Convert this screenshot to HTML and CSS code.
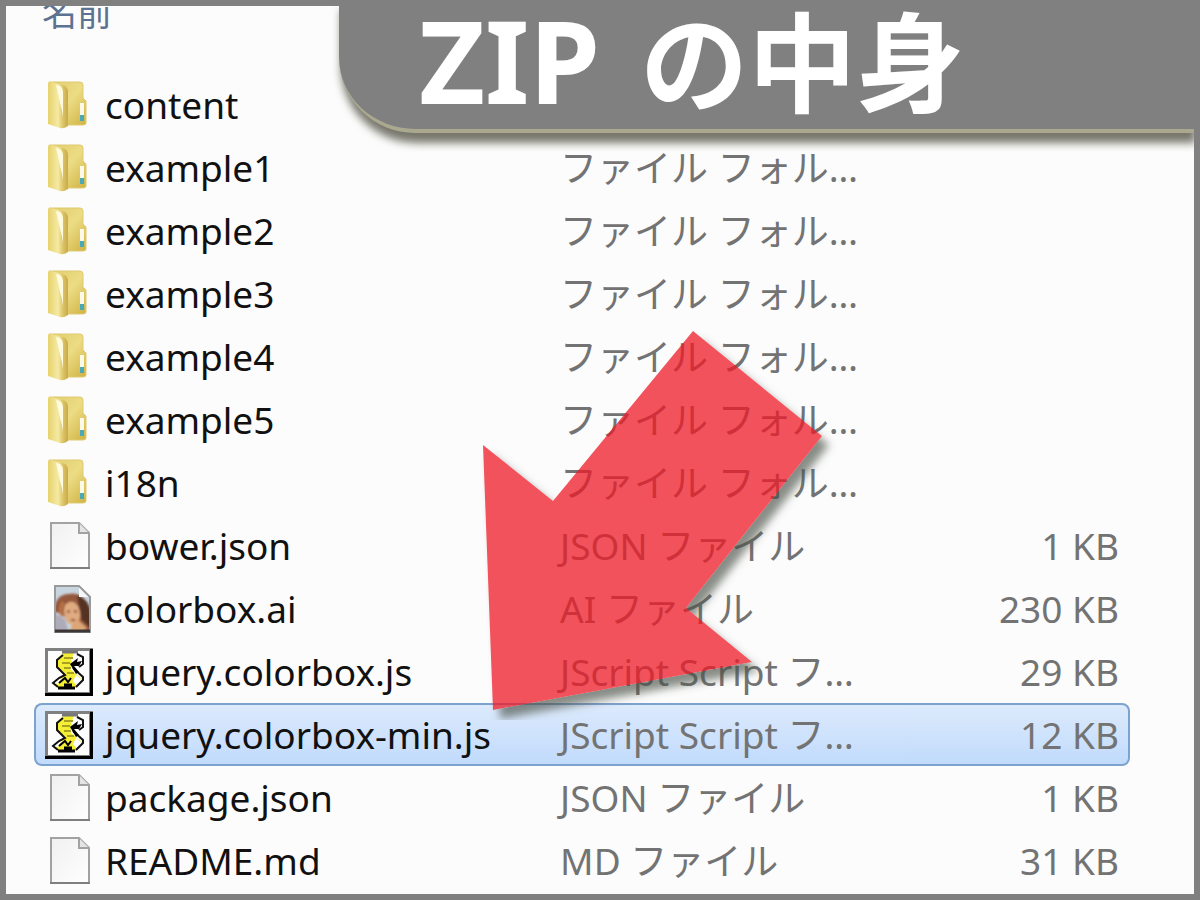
FILE: index.html
```html
<!DOCTYPE html>
<html lang="ja">
<head>
    <meta charset="UTF-8">
    <meta name="viewport" content="width=device-width, initial-scale=1.0">
    <title>ZIP の中身</title>
    <link rel="stylesheet" href="styles.css">
</head>
<body>
    <svg class="defs" aria-hidden="true">
        <defs>
            <linearGradient id="folderFront" x1="0" y1="0" x2="1" y2="0">
                <stop offset="0" stop-color="#e6d26c"/>
                <stop offset=".5" stop-color="#f5eaa4"/>
                <stop offset=".75" stop-color="#dcc467"/>
                <stop offset="1" stop-color="#c8aa48"/>
            </linearGradient>
            <linearGradient id="folderBack" x1="0" y1="0" x2="1" y2="1">
                <stop offset="0" stop-color="#e0cc6c"/>
                <stop offset=".5" stop-color="#ecdc84"/>
                <stop offset="1" stop-color="#d0b243"/>
            </linearGradient>
            <linearGradient id="paper" x1="0" y1="0" x2="1" y2="1">
                <stop offset="0" stop-color="#f0f0f0"/>
                <stop offset="1" stop-color="#ffffff"/>
            </linearGradient>
            <filter id="soft"><feGaussianBlur stdDeviation="1"/></filter>

            <symbol id="folder" viewBox="0 0 48 48">
                <path d="M4 1 H35 Q38 1 38 4 V17 L41 20 V42 Q41 44 38 44 H20 L4 42 Z" fill="url(#folderBack)" stroke="#dfca73"/>
                <path d="M3 3 Q3 1 6 1 L18 4 Q23 6 23 11 V45 Q19 48 15 47 L3 43 Z" fill="url(#folderFront)"/>
                <path d="M11 4 L15 5 Q18 7 18 12 V36 Q17 28 15 22 Q13 12 11 4" fill="#fffbe0"/>
                <rect x="35" y="22" width="4" height="12" fill="#fbf9e8"/>
                <rect x="35" y="34" width="4" height="6" fill="#4aa9b4"/>
            </symbol>

            <symbol id="file" viewBox="0 0 48 48">
                <path d="M6 1 H34 L44 11 V46 H6 Z" fill="url(#paper)" stroke="#a2a2a2" stroke-width="2"/>
                <path d="M34 1 V11 H44" fill="#e4e4e4" stroke="#a2a2a2" stroke-width="2"/>
                <path d="M5 46 H45" stroke="#7f7f7f" stroke-width="2"/>
            </symbol>

            <symbol id="ai" viewBox="0 0 48 48">
                <clipPath id="aiPage"><path d="M10 1 H34 L45 12 V47 H10 Z"/></clipPath>
                <g clip-path="url(#aiPage)">
                    <path d="M9 0 H46 V48 H9 Z" fill="#c8d4de"/>
                    <g filter="url(#soft)">
                        <path d="M9 27 Q10 9 24 9 Q36 6 42 20 L46 48 H36 L28 38 L14 28 Z" fill="#95583c"/>
                        <path d="M32 10 Q44 14 46 28 L46 44 L36 34 Z" fill="#563223"/>
                        <path d="M9 28 L20 34 L24 48 H9 Z" fill="#aeabb8"/>
                        <path d="M20 20 Q27 13 33 21 Q38 32 32 38 Q27 42 22 37 Q17 28 20 20 Z" fill="#e0ab80"/>
                        <path d="M32 34 L42 43 L36 48 H24 L27 40 Z" fill="#dca677"/>
                        <path d="M18 17 Q14 24 17 31" fill="none" stroke="#bd7646" stroke-width="3"/>
                        <path d="M22 27 L25 26 M29 26 L32 27 M26 35 H30" stroke="#8d4b3a" stroke-width="2"/>
                    </g>
                    <path d="M34 1 V12 H45 V1 Z" fill="#f4f6f7"/>
                </g>
                <path d="M10 1 H34 L45 12 V47 H10 Z" fill="none" stroke="#9a9a9a" stroke-width="2"/>
                <path d="M10 46 H45" stroke="#3c3636" stroke-width="3"/>
            </symbol>

            <symbol id="script" viewBox="0 0 48 48">
                <path d="M0 0 H48 V48 H0 Z" fill="#808080"/>
                <path d="M48 1 V48 H0 V45 H45 V1 Z" fill="#000"/>
                <path d="M3 3 H44 V44 H3 Z" fill="#fdfdfd"/>
                <path d="M18 5 H29 L26 12 L28 16 L24 20 L32 27 L37 31 L31 40 H14 L11 36 L17 29 L21 26 L13 20 L12 11 Z" fill="#f4ee35"/>
                <path d="M12 29 L18 28 L13 36 L8 35 Z M31 9 L35 10 L34 15 L29 14 Z M31 27 L37 32 L32 38 L28 33 Z" fill="#fff"/>
                <path d="M17 4 H33" stroke="#777" stroke-width="3"/>
                <path d="M18 7 L12 12 V19 L20 27 L14 30 L8 35 L13 39 M32 6 L38 9 V16 L34 19 M28 20 L38 29 V32 L31 39" fill="none" stroke="#111" stroke-width="2"/>
                <path d="M19 10 H28 M17 15 H25 M19 20 H26 M22 25 H29" stroke="#a8a021" stroke-width="2"/>
                <path d="M25 16 L33 10 L32 14 L37 13 L34 18 L29 18 L34 24 L31 26 Z" fill="#000"/>
                <path d="M14 35 L20 30 L23 34 L26 30" fill="none" stroke="#000" stroke-width="2"/>
                <path d="M13 40 H30 M19 37 H27" stroke="#000" stroke-width="3"/>
            </symbol>
        </defs>
    </svg>

    <main class="window">
        <table class="files">
            <thead>
                <tr><th class="name">名前</th><th class="type"></th><th class="size"></th></tr>
            </thead>
            <tbody>
                <tr><td><div class="file"><svg class="icon"><use href="#folder"/></svg>content</div></td><td></td><td></td></tr>
                <tr><td><div class="file"><svg class="icon"><use href="#folder"/></svg>example1</div></td><td>ファイル フォル…</td><td></td></tr>
                <tr><td><div class="file"><svg class="icon"><use href="#folder"/></svg>example2</div></td><td>ファイル フォル…</td><td></td></tr>
                <tr><td><div class="file"><svg class="icon"><use href="#folder"/></svg>example3</div></td><td>ファイル フォル…</td><td></td></tr>
                <tr><td><div class="file"><svg class="icon"><use href="#folder"/></svg>example4</div></td><td>ファイル フォル…</td><td></td></tr>
                <tr><td><div class="file"><svg class="icon"><use href="#folder"/></svg>example5</div></td><td>ファイル フォル…</td><td></td></tr>
                <tr><td><div class="file"><svg class="icon"><use href="#folder"/></svg>i18n</div></td><td>ファイル フォル…</td><td></td></tr>
                <tr><td><div class="file"><svg class="icon"><use href="#file"/></svg>bower.json</div></td><td>JSON ファイル</td><td>1 KB</td></tr>
                <tr><td><div class="file"><svg class="icon"><use href="#ai"/></svg>colorbox.ai</div></td><td>AI ファイル</td><td>230 KB</td></tr>
                <tr><td><div class="file"><svg class="icon"><use href="#script"/></svg>jquery.colorbox.js</div></td><td>JScript Script フ…</td><td>29 KB</td></tr>
                <tr class="selected"><td><div class="file"><svg class="icon"><use href="#script"/></svg>jquery.colorbox-min.js</div></td><td>JScript Script フ…</td><td>12 KB</td></tr>
                <tr><td><div class="file"><svg class="icon"><use href="#file"/></svg>package.json</div></td><td>JSON ファイル</td><td>1 KB</td></tr>
                <tr><td><div class="file"><svg class="icon"><use href="#file"/></svg>README.md</div></td><td>MD ファイル</td><td>31 KB</td></tr>
            </tbody>
        </table>

        <h1 class="banner"><span class="zip">ZIP</span> の中身</h1>

        <svg class="arrow" viewBox="0 0 360 400" aria-hidden="true">
            <defs>
                <!-- shadow only outside the arrow, so it does not darken the red -->
                <filter id="arrowShadow" x="-10%" y="-10%" width="120%" height="120%">
                    <feOffset in="SourceAlpha" dx="7" dy="9"/>
                    <feGaussianBlur stdDeviation="4" result="blur"/>
                    <feFlood flood-color="#4a5046" flood-opacity=".65"/>
                    <feComposite in2="blur" operator="in"/>
                    <feComposite in2="SourceAlpha" operator="out"/>
                </filter>
            </defs>
            <path d="M213 11 L342 116 L206 288 L272 342 L13 390 L3 125 L73 181 Z" filter="url(#arrowShadow)"/>
            <path class="arrow-body" d="M213 11 L342 116 L206 288 L272 342 L13 390 L3 125 L73 181 Z"/>
        </svg>
    </main>
</body>
</html>
```
FILE: styles.css
```css
* { box-sizing: border-box; }
body { margin: 0; background: #808080; font-family: "Noto Sans", "Noto Sans CJK JP", sans-serif; font-size: 37px; color: #111; }
.defs { position: absolute; width: 0; height: 0; }

.window {
    position: relative;
    min-height: 100vh;
    padding: 0 64px 0 28px;
    border: 6px solid #808080;
    background: #fcfcfc;
    overflow: hidden;
}

.files { width: 100%; table-layout: fixed; border-collapse: separate; border-spacing: 0; }
.files th { height: 67px; padding: 0 0 0 8px; vertical-align: top; text-align: left; font-size: 35px; font-weight: normal; line-height: 14px; color: #5b7290; }
.files td { height: 63px; padding: 0; line-height: 48px; white-space: nowrap; color: #737373; }
.files td:first-child { padding-left: 11px; color: #111; }
.files td:last-child { padding-right: 11px; text-align: right; }
.name { width: 48%; }
.type { width: 32%; }
.size { width: 20%; }

.file { display: flex; align-items: center; gap: 12px; }
.icon { flex: none; width: 48px; height: 48px; }

.selected td { border: solid #7da2ce; border-width: 2px 0; background: linear-gradient(#dceafc, #c1dbfc); }
.selected td:first-child { border-left-width: 2px; border-radius: 8px 0 0 8px; padding-left: 9px; }
.selected td:last-child { border-right-width: 2px; border-radius: 0 8px 8px 0; padding-right: 9px; }

.banner {
    position: absolute;
    top: -6px;
    left: 333px;
    right: 0;
    height: 133px;
    margin: 0;
    padding-left: 80px;
    border-bottom: 4px solid #aaa990;
    border-radius: 0 0 0 76px;
    background: #808080;
    box-shadow: 2px 10px 8px #77776c;
    color: #fff;
    font-size: 108px;
    font-weight: bold;
    line-height: 120px;
    white-space: nowrap;
}
.zip { margin-right: 12px; font-size: 114px; }

.arrow { position: absolute; left: 474px; top: 314px; width: 360px; height: 400px; }
.arrow-body { fill: #ed1925; fill-opacity: .75; }
```
